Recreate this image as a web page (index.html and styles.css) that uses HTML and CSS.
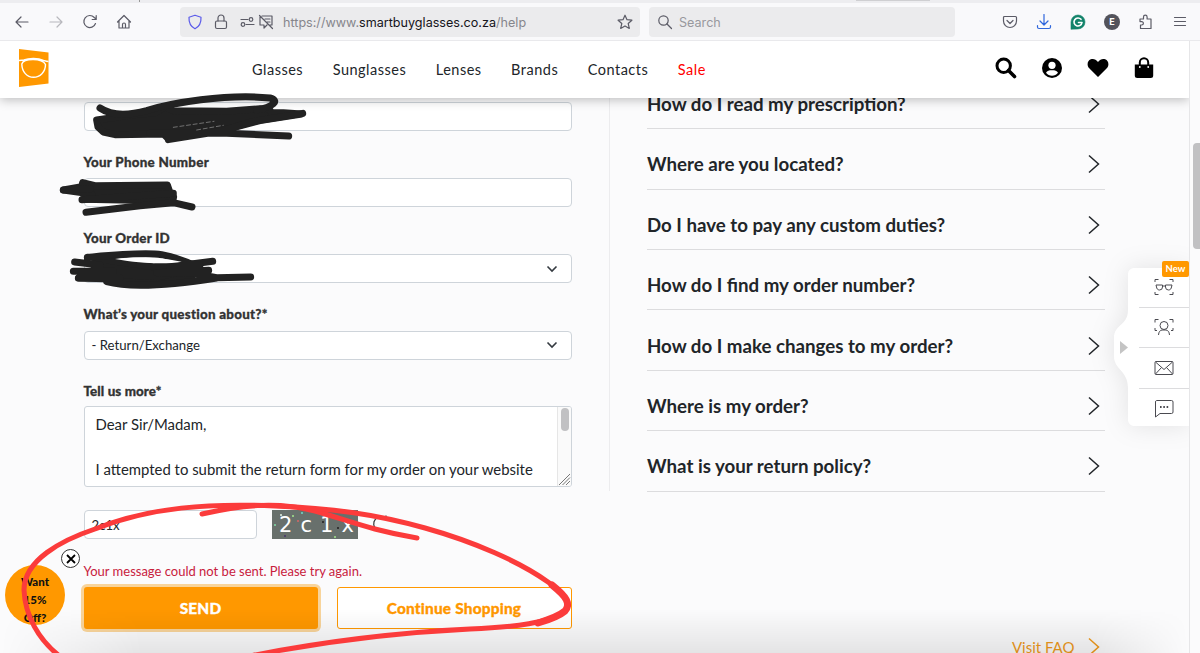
FILE: index.html
```html
<!DOCTYPE html>
<html lang="en">
<head>
    <meta charset="UTF-8">
    <meta name="viewport" content="width=device-width, initial-scale=1.0">
    <title>Help - SmartBuyGlasses</title>
    <link rel="stylesheet" href="styles.css">
</head>
<body>
    <!-- Browser toolbar -->
    <div class="tabstrip"><span class="tab-sep"></span><span class="tab-edge"></span></div>
    <div class="toolbar">
        <div class="tool-nav">
            <svg width="16" height="16" viewBox="0 0 16 16"><path d="M14 8H2M7 3L2 8l5 5"/></svg>
            <svg class="disabled" width="16" height="16" viewBox="0 0 16 16"><path d="M2 8h12M9 3l5 5-5 5"/></svg>
            <svg width="16" height="16" viewBox="0 0 16 16"><path d="M13.500 9.500A6 6 0 1 1 12.300 3.500L14 5M14.200 1.500V5.500H10.200"/></svg>
            <svg width="16" height="16" viewBox="0 0 16 16"><path d="M1.500 8L8 1.500 14.500 8M3 7v7h10V7M6.500 14v-3.500a1.500 1.500 0 0 1 3 0V14"/></svg>
        </div>
        <div class="urlbar">
            <svg class="shield" width="16" height="16" viewBox="0 0 16 16"><path d="M8 1.200L14 3.200C14.300 8.500 12.300 12.500 8 14.800 3.700 12.500 1.700 8.500 2 3.200z"/></svg>
            <svg class="lock" width="14" height="16" viewBox="0 0 14 16"><rect x="1.500" y="7" width="11" height="7.500" rx="1.500"/><path d="M4 7V4a3 3 0 0 1 6 0v3"/></svg>
            <svg class="perm" width="15" height="12" viewBox="0 0 15 12"><path d="M1 3.500h7M6 8.500h8"/><circle cx="11" cy="3.500" r="1.800"/><circle cx="3" cy="8.500" r="1.800"/></svg>
            <svg width="16" height="16" viewBox="0 0 16 16"><path d="M4 2h10v9h-2M9 11l-3 3v-3H2V3M1.500 1.500l13 13M7 5h5M9 8h3"/></svg>
            <span class="url">https://www.<b>smartbuyglasses.co.za</b>/help</span>
            <svg class="star" width="16" height="16" viewBox="0 0 16 16"><path d="M8 1.200l2 4.500 4.900.5-3.700 3.300 1.100 4.900L8 11.900l-4.300 2.500 1.100-4.900L1.100 6.200 6 5.700z"/></svg>
        </div>
        <div class="searchbar">
            <svg width="16" height="16" viewBox="0 0 16 16"><circle cx="6.500" cy="6.500" r="4.700"/><path d="M10 10l4.500 4.500"/></svg>
            <span>Search</span>
        </div>
        <div class="tool-ext">
            <svg width="16" height="16" viewBox="0 0 16 16"><path d="M2.500 2.500h11a1 1 0 0 1 1 1V7a6.500 6.500 0 0 1-13 0V3.500a1 1 0 0 1 1-1zM5 6.500l3 3 3-3"/></svg>
            <svg class="download" width="16" height="16" viewBox="0 0 16 16"><path d="M8 .5v10M4 7l4 4 4-4M1.500 11.500V13a1.500 1.500 0 0 0 1.500 1.500h10a1.500 1.500 0 0 0 1.500-1.500v-1.500"/></svg>
            <svg class="gram" width="16" height="16" viewBox="0 0 16 16"><path class="gram-bg" d="M1 15V8a7 7 0 1 1 7 7z"/><path class="gram-g" d="M11 5.300a4 4 0 1 0 1 3.200H8.500"/></svg>
            <span class="ext-e">E</span>
            <svg width="16" height="16" viewBox="0 0 16 16"><path d="M2.500 14.500v-3.500h1.200a1.700 1.700 0 0 0 0-3.400H2V5h3.500V3a1.800 1.800 0 0 1 3.600 0v2H13v9.500z"/></svg>
            <svg width="16" height="16" viewBox="0 0 16 16"><path d="M2.500 3.500h11M2.500 7.500h11M2.500 11.500h11"/></svg>
        </div>
    </div>

    <div class="viewport">
        <div class="page">
            <header class="header">
                <svg class="logo" width="30" height="38" viewBox="0 0 30 38">
                    <path class="logo-bg" d="M0 0L29.500 3.500V34.500L0 38z"/>
                    <path class="logo-line" d="M0 11.500C2 11 3.500 11.500 5 11 10 9 19 9 24.500 11.300 26.500 12 28 12.500 29.500 12.500M2.800 15C3.500 12.500 7 10.500 14 10.500S25 12.500 26.500 15.500C26.500 23 21 28.300 14.500 28.300S3 23 2.800 15z"/>
                </svg>
                <nav class="menu">
                    <a>Glasses</a>
                    <a>Sunglasses</a>
                    <a>Lenses</a>
                    <a>Brands</a>
                    <a>Contacts</a>
                    <a class="sale">Sale</a>
                </nav>
                <div class="header-icons">
                    <svg width="22" height="22" viewBox="0 0 22 22"><circle cx="8.700" cy="8.700" r="6.700" fill="none" stroke="#000" stroke-width="3"/><path d="M13.500 13.500l6 6" stroke="#000" stroke-width="3.600" stroke-linecap="round"/></svg>
                    <svg width="20" height="20" viewBox="0 0 20 20"><circle cx="10" cy="10" r="10"/><circle cx="10" cy="7.300" r="3.600" fill="#fff"/><path d="M4 14.800c1.200-2 3-2.500 6-2.500s4.800.5 6 2.500a7.500 7.500 0 0 1-12 0z" fill="#fff"/></svg>
                    <svg width="22" height="20" viewBox="0 0 22 20"><path d="M11 19L2 10C-.5 7 .5 2.500 3.800 1.300 6.600.4 9 1.500 11 4c2-2.500 4.400-3.600 7.200-2.700C21.500 2.500 22.500 7 20 10z"/></svg>
                    <svg width="20" height="22" viewBox="0 0 20 22"><path d="M.8 7.500h18.400V18.500a2.500 2.500 0 0 1-2.500 2.500H3.300A2.500 2.500 0 0 1 .8 18.500z"/><path d="M5.800 10V5.500a4.200 4.200 0 0 1 8.400 0V10" fill="none" stroke="#000" stroke-width="2"/><circle cx="5.800" cy="10" r=".9" fill="#fff"/><circle cx="14.200" cy="10" r=".9" fill="#fff"/></svg>
                </div>
            </header>

            <main class="content">
                <form class="contact-form">
                    <div class="control"></div>
                    <label>Your Phone Number</label>
                    <div class="control"></div>
                    <label>Your Order ID</label>
                    <div class="control select">
                        <span></span>
                        <svg width="12" height="8" viewBox="0 0 12 8"><path d="M1.500 1.500L6 6l4.500-4.500"/></svg>
                    </div>
                    <label>What’s your question about?*</label>
                    <div class="control select">
                        <span>- Return/Exchange</span>
                        <svg width="12" height="8" viewBox="0 0 12 8"><path d="M1.500 1.500L6 6l4.500-4.500"/></svg>
                    </div>
                    <label class="tight">Tell us more*</label>
                    <div class="message">
                        <div class="message-text">Dear Sir/Madam,<br><br>I attempted to submit the return form for my order on your website</div>
                        <div class="message-scroll">
                            <span class="message-thumb"></span>
                            <svg width="13" height="13" viewBox="0 0 13 13"><path d="M1 12L12 1M4.500 12L12 4.500M8 12l4-4"/></svg>
                        </div>
                    </div>
                    <div class="captcha">
                        <div class="control captcha-input">2c1x</div>
                        <div class="captcha-image">
                            <span>2</span><span>c</span><span>1</span><span>x</span>
                        </div>
                        <svg class="refresh" width="16" height="18" viewBox="0 0 16 18"><path d="M3 13.500A6.500 6.500 0 0 1 6 3.500c3-1.300 6 0 7.500 1.500M14 1.500v4h-4"/></svg>
                    </div>
                    <p class="error">Your message could not be sent. Please try again.</p>
                    <div class="buttons">
                        <button type="button" class="btn btn-send">SEND</button>
                        <button type="button" class="btn btn-continue">Continue Shopping</button>
                    </div>
                </form>

                <section class="faq">
                    <ul class="faq-list">
                        <li>How do I read my prescription?<svg width="12" height="20" viewBox="0 0 12 20"><path d="M1 1.500L10.500 10 1 18.500"/></svg></li>
                        <li>Where are you located?<svg width="12" height="20" viewBox="0 0 12 20"><path d="M1 1.500L10.500 10 1 18.500"/></svg></li>
                        <li>Do I have to pay any custom duties?<svg width="12" height="20" viewBox="0 0 12 20"><path d="M1 1.500L10.500 10 1 18.500"/></svg></li>
                        <li>How do I find my order number?<svg width="12" height="20" viewBox="0 0 12 20"><path d="M1 1.500L10.500 10 1 18.500"/></svg></li>
                        <li>How do I make changes to my order?<svg width="12" height="20" viewBox="0 0 12 20"><path d="M1 1.500L10.500 10 1 18.500"/></svg></li>
                        <li>Where is my order?<svg width="12" height="20" viewBox="0 0 12 20"><path d="M1 1.500L10.500 10 1 18.500"/></svg></li>
                        <li>What is your return policy?<svg width="12" height="20" viewBox="0 0 12 20"><path d="M1 1.500L10.500 10 1 18.500"/></svg></li>
                    </ul>
                    <a class="visit-faq">Visit FAQ<svg width="12" height="20" viewBox="0 0 12 20"><path d="M1 1.500L10.500 10 1 18.500"/></svg></a>
                </section>
            </main>
            <div class="bottom-fade"></div>

            <!-- Floating side widget -->
            <aside class="widget">
                <svg class="widget-shape" width="75" height="158" viewBox="0 0 75 158"><path d="M75 0H20a6 6 0 0 0-6 6V42C14 58 0 56 0 70v18c0 14 14 14 14 32v32a6 6 0 0 0 6 6H75z"/></svg>
                <svg class="widget-arrow" width="8" height="13" viewBox="0 0 8 13"><path d="M0 0l8 6.500L0 13z"/></svg>
                <span class="badge">New</span>
                <div class="widget-items">
                    <div><svg width="20" height="18" viewBox="0 0 20 18"><path d="M1 4V1.500h3.500M19 4V1.500h-3.500M1 14v2.500h3.500M19 14v2.500h-3.500"/><path d="M2 7h6.500v2a3 3 0 0 1-3 3c-2 0-2.800-1.500-3-3zM18 7h-6.500v2a3 3 0 0 0 3 3c2 0 2.800-1.500 3-3zM8.500 8h3"/></svg></div>
                    <div><svg width="20" height="18" viewBox="0 0 20 18"><path d="M1 4.500V1.500h3.500M19 4.500V1.500h-3.500M1 10v2.500h2M19 10v2.500h-2M4.500 17c.3-3.500 1.500-4.500 3.500-5h4c2 .5 3.200 1.500 3.500 5"/><circle cx="10" cy="7.500" r="4"/></svg></div>
                    <div><svg width="20" height="16" viewBox="0 0 20 16"><rect x="1" y="1.500" width="18" height="13" rx="1"/><path d="M1.500 2L10 9.500 18.500 2M1.500 14L7.500 7.500M18.500 14l-6-6.500"/></svg></div>
                    <div><svg width="20" height="19" viewBox="0 0 20 19"><path d="M2.500 1.500h15A1.500 1.500 0 0 1 19 3v10a1.500 1.500 0 0 1-1.500 1.500H6L1.500 18V3a1.500 1.500 0 0 1 1-1.500z"/><path class="dots" d="M6 8h1.600M9.300 8h1.600M12.600 8h1.600"/></svg></div>
                </div>
            </aside>

            <!-- Discount bubble -->
            <div class="promo">Want<br>15%<br>Off?</div>
            <span class="promo-close"><svg width="10" height="10" viewBox="0 0 10 10"><path d="M1 1l8 8M9 1L1 9"/></svg></span>
        </div>
        <div class="scrollbar"><span></span></div>
    </div>

    <!-- Marker strokes -->
    <svg class="marks" width="1200" height="653" viewBox="0 0 1200 653">
        <g class="ink" transform="translate(40 90) scale(.33333)">
            <path class="ink-fill" d="M170 90L280 74 345 68 375 50 400 62 560 64 660 56 688 58 695 68 730 68 785 72 660 92 560 118 385 146 370 132 225 134 190 126 174 111z"/>
            <path d="M180 54C215 78 260 78 320 62C390 40 560 10 690 24C720 32 700 50 650 60M788 70L640 94 540 124 385 149M330 130L560 130 746 138"/>
            <path class="gap" d="M400 112L522 94M470 120L550 106"/>
        </g>
        <g class="ink" transform="translate(40 90) scale(.33333)">
            <path class="ink-fill" d="M70 300L125 290 128 278 165 287 382 285 389 305 401 320 398 333 128 328 155 312z"/>
            <path d="M70 300L150 296M126 329L400 310M138 367L300 347 400 338 456 351"/>
        </g>
        <g class="ink" transform="translate(40 210) scale(.33333)">
            <path class="ink-fill" d="M115 204L165 180 160 160 200 150 340 170 440 160 480 165 470 190 440 203 360 221 250 216 195 206z"/>
            <path d="M142 142C210 136 310 126 365 134C410 142 440 154 480 175M104 156L180 165M100 184L220 184M116 204L240 204M518 154L390 170M506 181L350 188 460 190 530 203 632 201M200 215C270 234 390 226 530 204"/>
            <path class="sliver" d="M225 147C280 140 350 140 425 155C380 163 310 162 225 147z"/>
        </g>
        <g class="red">
            <path d="M202 514C245 504 280 502 315 511C350 521 370 530 417 538"/>
            <path d="M62 658C38 640 25 615 24 590C24 560 62 540 95 529C150 507 210 503 275 506C330 508 375 514 425 528C475 542 520 562 548 582C564 593 572 604 565 611C550 623 515 627 470 629C390 633 320 642 250 656"/>
            <path class="thick" d="M552 585C567 597 571 604 565 611C558 617 548 620 538 623"/>
        </g>
    </svg>
</body>
</html>
```
FILE: styles.css
```css
* {
    margin: 0;
    padding: 0;
    box-sizing: border-box;
}
body {
    width: 1200px;
    height: 653px;
    overflow: hidden;
    position: relative;
    font-family: Lato, "Open Sans", sans-serif;
    background-color: #fbfbfc;
    color: #212529;
}
svg {
    display: block;
    flex: none;
}

/* Browser toolbar */
.tabstrip {
    height: 3px;
    background-color: #ededf0;
    display: flex;
    align-items: flex-start;
}
.tab-sep {
    width: 1px;
    height: 2px;
    margin-left: 139px;
    background-color: #999;
}
.tab-edge {
    width: 74px;
    height: 1px;
    margin-left: 716px;
    background-color: #cfcfd2;
}
.toolbar {
    height: 38px;
    display: flex;
    align-items: center;
    padding: 0 12px 0 14px;
    background-color: #f9f9fb;
    border-bottom: 1px solid #e9e9ec;
    font-family: Inter, "Liberation Sans", sans-serif;
    font-size: 12.6px;
}
.toolbar svg {
    fill: none;
    stroke: #5b5b66;
    stroke-width: 1.2;
    stroke-linecap: round;
    stroke-linejoin: round;
}
.tool-nav {
    width: 166px;
    display: flex;
    gap: 18px;
}
.toolbar .disabled {
    stroke: #b8b8bd;
}
.urlbar {
    width: 460px;
    height: 30px;
    display: flex;
    align-items: center;
    padding: 0 7px;
    background-color: #ebebed;
    border-radius: 4px;
}
.toolbar .shield {
    stroke: #5b5bea;
}
.lock {
    margin-left: 11px;
}
.perm {
    margin: 0 3px 0 12px;
}
.url {
    flex: 1;
    margin-left: 9px;
    padding-top: 1px;
    color: #86868c;
    white-space: nowrap;
}
.url b {
    font-weight: 400;
    color: #15141a;
}
.searchbar {
    width: 306px;
    height: 30px;
    margin-left: 9px;
    padding: 0 8px;
    display: flex;
    align-items: center;
    gap: 6px;
    background-color: #ebebed;
    border-radius: 4px;
    color: #98989d;
}
.searchbar span {
    padding-top: 1px;
}
.tool-ext {
    margin-left: auto;
    display: flex;
    align-items: center;
    gap: 18px;
}
.toolbar .download {
    stroke: #2f66dc;
}
.toolbar .gram-bg {
    fill: #12836a;
    stroke: #12836a;
    stroke-width: 0.6;
}
.toolbar .gram-g {
    stroke: #fff;
    stroke-width: 1.6;
}
.ext-e {
    width: 16px;
    height: 16px;
    border-radius: 50%;
    background-color: #53535b;
    color: #fff;
    font-size: 9px;
    font-weight: 700;
    line-height: 16px;
    text-align: center;
}

/* Page */
.viewport {
    height: 612px;
    display: flex;
}
.page {
    flex: 1;
    position: relative;
    overflow: hidden;
}
.scrollbar {
    width: 11px;
    padding: 102px 0 0 3px;
    border-left: 1px solid #e6e6e8;
}
.scrollbar span {
    display: block;
    height: 106px;
    border-radius: 4px 0 0 4px;
    background-color: #c1c1c3;
}
.header {
    position: relative;
    z-index: 2;
    height: 57px;
    display: flex;
    align-items: center;
    padding: 0 35px 0 19px;
    background-color: #fff;
    box-shadow: 0 2px 10px rgba(0, 0, 0, 0.25);
}
.logo {
    margin-bottom: 3px;
}
.logo-bg {
    fill: #ff9800;
}
.logo-line {
    fill: none;
    stroke: #fff;
    stroke-width: 1.4;
}
.menu {
    display: flex;
    gap: 29.5px;
    margin-left: 203px;
    font-size: 14.5px;
    letter-spacing: 0.5px;
}
.menu .sale {
    color: #f00;
}
.header-icons {
    margin-left: auto;
    display: flex;
    align-items: center;
    gap: 25px;
    padding-bottom: 4px;
}
.content {
    display: flex;
    padding-left: 83.5px;
}

/* Contact form */
.contact-form {
    width: 488px;
    padding-top: 4px;
}
.control {
    height: 29px;
    border: 1px solid #ced4da;
    border-radius: 4px;
    background-color: #fff;
    font-size: 13.2px;
    line-height: 28px;
    padding: 0 7px;
}
.contact-form label {
    display: block;
    margin-top: 21px;
    margin-bottom: 6.2px;
    line-height: 20px;
    font-size: 13.4px;
    font-weight: 900;
    letter-spacing: 0.25px;
    -webkit-text-stroke: 0.3px #333;
    color: #333;
}
.contact-form .tight {
    margin-bottom: 5.5px;
    letter-spacing: 0.1px;
}
.select {
    display: flex;
    align-items: center;
    justify-content: space-between;
    padding-right: 13px;
}
.select svg {
    fill: none;
    stroke: #343a40;
    stroke-width: 1.6;
}
.message {
    height: 81px;
    display: flex;
    border: 1px solid #ced4da;
    border-radius: 3px;
    background-color: #fff;
    overflow: hidden;
}
.message-text {
    flex: 1;
    padding: 6px 0 0 11px;
    font-size: 14.9px;
    line-height: 22.6px;
    white-space: nowrap;
}
.message-scroll {
    width: 14px;
    display: flex;
    flex-direction: column;
    justify-content: space-between;
    background-color: #fafafa;
    border-left: 1px solid #e6e6e6;
}
.message-thumb {
    width: 8px;
    height: 23px;
    margin: 1px 0 0 3px;
    border-radius: 4px;
    background-color: #c1c1c3;
}
.message-scroll svg {
    fill: none;
    stroke: #777;
    stroke-width: 1;
}
.captcha {
    display: flex;
    margin-top: 23px;
}
.captcha-input {
    width: 173px;
}
.captcha-image {
    width: 86px;
    height: 29px;
    margin-left: 15.5px;
    display: flex;
    justify-content: space-between;
    padding: 0 4px 0 7px;
    color: #fff;
    font-family: "DejaVu Sans", sans-serif;
    font-size: 21px;
    line-height: 30px;
    background-color: #68706c;
    background-image:
        radial-gradient(circle at 3px 15px, #7fd0a0 0.6px, transparent 1.2px),
        radial-gradient(circle at 9px 5px, #d8e8d8 0.6px, transparent 1.2px),
        radial-gradient(circle at 21px 6px, #9fdc8a 0.6px, transparent 1.2px),
        radial-gradient(circle at 13px 26px, #4d4268 1px, transparent 1.5px),
        radial-gradient(circle at 26px 11px, #c66 0.6px, transparent 1.2px),
        radial-gradient(circle at 30px 3px, #6fd0c0 0.6px, transparent 1.2px),
        radial-gradient(circle at 51px 12px, #333 1px, transparent 1.5px),
        radial-gradient(circle at 66px 18px, #333 1px, transparent 1.5px),
        radial-gradient(circle at 63px 27px, #9fdc8a 0.6px, transparent 1.2px);
}
.refresh {
    margin: 4px 0 0 14px;
    fill: none;
    stroke: #333;
    stroke-width: 1.2;
}
.error {
    margin-top: 22px;
    line-height: 20px;
    font-size: 13px;
    color: #c8213c;
}
.buttons {
    display: flex;
    justify-content: space-between;
    margin-top: 6px;
}
.btn {
    height: 42px;
    border-radius: 3px;
    font-family: inherit;
    font-size: 15.4px;
    font-weight: 900;
    letter-spacing: 0.2px;
}
.btn-send {
    width: 234px;
    border: none;
    background-color: #ff9800;
    color: #fff;
    box-shadow: 0 0 0 3px #f8d49b;
    -webkit-text-stroke: 0.3px #fff;
}
.btn-continue {
    width: 235px;
    border: 1px solid #ff9800;
    background-color: #fff;
    color: #ff9800;
    -webkit-text-stroke: 0.3px #ff9800;
}

/* FAQ */
.faq {
    width: 496px;
    height: 393px;
    margin-left: 37px;
    padding-left: 37.5px;
    border-left: 1px solid #ececee;
}
.faq-list {
    list-style: none;
    margin-top: -29.3px;
}
.faq-list li {
    height: 60.42px;
    display: flex;
    align-items: center;
    justify-content: space-between;
    padding: 11px 5px 0 0;
    border-bottom: 1px solid #dcdcde;
    font-size: 18.7px;
    font-weight: 700;
}
.faq svg {
    fill: none;
    stroke: #212529;
    stroke-width: 1.5;
}
.visit-faq {
    display: flex;
    justify-content: flex-end;
    align-items: center;
    gap: 13px;
    margin-top: 145.5px;
    padding-right: 5px;
    font-size: 15px;
    line-height: 20px;
    color: #f09a1c;
}
.visit-faq svg {
    stroke: #f09a1c;
}
.bottom-fade {
    position: absolute;
    left: 0;
    right: 0;
    bottom: 0;
    height: 44px;
    background: linear-gradient(rgba(0, 0, 0, 0), rgba(0, 0, 0, 0.09));
    -webkit-mask-image: linear-gradient(90deg, transparent, #000 12%, #000 92%, transparent);
    mask-image: linear-gradient(90deg, transparent, #000 12%, #000 92%, transparent);
    pointer-events: none;
}

/* Side widget */
.widget {
    position: absolute;
    top: 227px;
    right: 0;
    width: 75px;
    height: 158px;
}
.widget-shape {
    position: absolute;
    overflow: visible;
    fill: #fff;
    filter: drop-shadow(0 0 12px rgba(0, 0, 0, 0.1));
}
.widget-arrow {
    position: absolute;
    left: 6px;
    top: 73px;
    fill: #c4c4c4;
}
.badge {
    position: absolute;
    top: -7px;
    right: 0;
    z-index: 1;
    width: 27px;
    height: 16px;
    border-radius: 2px;
    background-color: #ff9800;
    color: #fff;
    font-size: 9.5px;
    font-weight: 700;
    line-height: 16px;
    text-align: center;
}
.widget-items {
    position: relative;
    padding-left: 25px;
}
.widget-items div {
    height: 40.4px;
    display: flex;
    align-items: center;
    justify-content: center;
    border-bottom: 1px solid #dcdcde;
}
.widget-items div:first-child {
    height: 39.8px;
}
.widget-items div:last-child {
    border-bottom: none;
}
.widget-items svg {
    fill: none;
    stroke: #4a4a50;
    stroke-width: 1;
}
.widget-items .dots {
    stroke-width: 1.8;
}

/* Discount bubble */
.promo {
    position: absolute;
    left: 5px;
    top: 524px;
    width: 60px;
    height: 60px;
    padding-top: 8px;
    border-radius: 50%;
    background-color: #ff9800;
    color: #111;
    font-size: 11.5px;
    font-weight: 900;
    line-height: 18px;
    text-align: center;
}
.promo-close {
    position: absolute;
    left: 61px;
    top: 508px;
    width: 19px;
    height: 19px;
    display: flex;
    align-items: center;
    justify-content: center;
    border: 1px solid #333;
    border-radius: 50%;
    background-color: #fff;
}
.promo-close svg {
    stroke: #000;
    stroke-width: 1.8;
}

/* Marker strokes */
.marks {
    position: absolute;
    left: 0;
    top: 0;
    z-index: 5;
    pointer-events: none;
    fill: none;
    stroke-linecap: round;
    stroke-linejoin: round;
}
.ink {
    stroke: #222;
    stroke-width: 21;
}
.ink-fill {
    fill: #222;
}
.ink .gap {
    stroke: #999;
    stroke-width: 2;
    stroke-dasharray: 12 8;
}
.ink .sliver {
    fill: #fff;
    stroke: none;
}
.red {
    stroke: #fb3b3b;
    stroke-width: 5;
}
.red .thick {
    stroke-width: 7;
}
```
